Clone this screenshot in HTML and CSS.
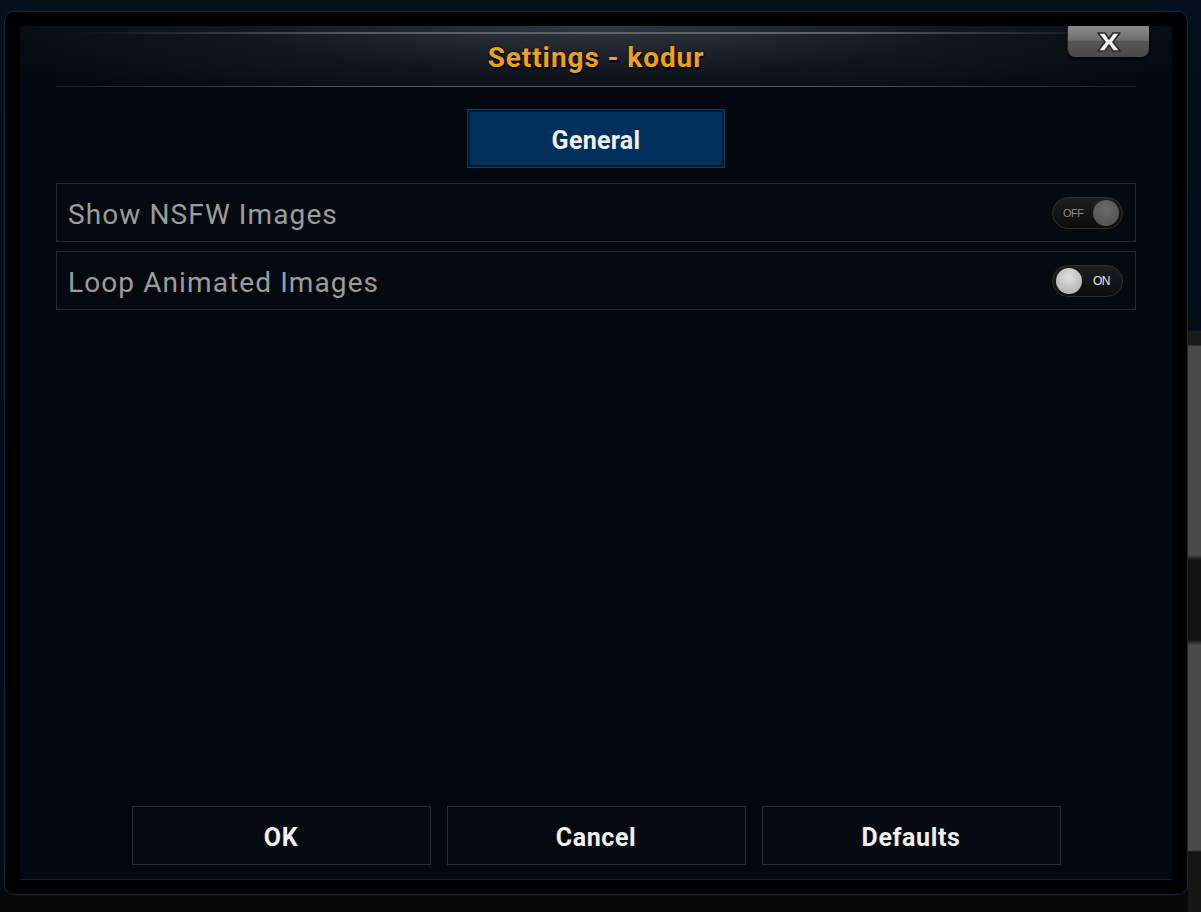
FILE: index.html
```html
<!DOCTYPE html>
<html>
<head>
<meta charset="utf-8">
<title>Settings - kodur</title>
<link rel="stylesheet" href="styles.css">
</head>
<body>
<div class="frame">
  <div class="panel">
    <div class="header">
      <h1 class="title">Settings - kodur</h1>
      <button class="close" aria-label="Close">
        <svg width="28" height="22" viewBox="0 0 28 22">
          <path d="M3 2 H10 L14 8 L18 2 H25 L18 11 L25 20 H18 L14 14 L10 20 H3 L10 11 Z" fill="#f2f2f2" stroke="#2a2a2a" stroke-width="1.6" stroke-linejoin="round"/>
        </svg>
      </button>
    </div>
    <div class="tabs">
      <div class="tab">General</div>
    </div>
    <div class="rows">
      <div class="row">
        <span class="label">Show NSFW Images</span>
        <span class="toggle off"><span class="ttext">OFF</span><span class="knob"></span></span>
      </div>
      <div class="row">
        <span class="label">Loop Animated Images</span>
        <span class="toggle on"><span class="knob"></span><span class="ttext">ON</span></span>
      </div>
    </div>
    <div class="buttons">
      <button class="btn">OK</button>
      <button class="btn">Cancel</button>
      <button class="btn">Defaults</button>
    </div>
  </div>
</div>
</body>
</html>
```

FILE: styles.css
```css
html, body {
  margin: 0;
  padding: 0;
}
body {
  width: 1201px;
  height: 912px;
  overflow: hidden;
  font-family: Roboto, "Liberation Sans", sans-serif;
  background:
    linear-gradient(to bottom, #03101e 0, #020c18 330px, #1a1a1a 331px, #1a1a1a 345px, #4a4a4a 346px, #4a4a4a 555px, #121212 560px, #121212 640px, #4a4a4a 645px, #4a4a4a 850px, #151515 852px, #151515 912px) right top / 13px 100% no-repeat,
    linear-gradient(to bottom, #03101e 0, #020b16 860px, #080808 895px, #080808 912px);
  box-sizing: border-box;
  padding: 11px 13px 17px 4px;
}
.frame {
  width: 1184px;
  height: 884px;
  box-sizing: border-box;
  border: 1px solid #0b2a4a;
  border-radius: 10px;
  background: #000;
  padding: 14px 15px;
}
.panel {
  position: relative;
  height: 100%;
  background: #030810;
  border-bottom: 1px solid #0a2036;
  box-sizing: border-box;
  display: flex;
  flex-direction: column;
}
.header {
  height: 61px;
  position: relative;
  display: flex;
  align-items: center;
  justify-content: center;
  background: radial-gradient(ellipse 62% 150% at 50% 0%, rgba(62,66,74,0.8), rgba(28,31,37,0.6) 50%, rgba(3,8,16,0) 100%);
}
.header::before {
  content: "";
  position: absolute;
  left: 0;
  right: 0;
  top: 6px;
  height: 2px;
  background: linear-gradient(to right, rgba(80,84,90,0) 5%, rgba(110,114,120,0.7) 30%, rgba(110,114,120,0.8) 70%, rgba(80,84,90,0) 95%);
}
.header::after {
  content: "";
  position: absolute;
  left: 36px;
  right: 36px;
  bottom: 0;
  height: 1px;
  background: linear-gradient(to right, rgba(60,63,68,0.4), #56595e 30%, #56595e 70%, rgba(60,63,68,0.4));
}
.title {
  margin: 0;
  padding-top: 1px;
  font-size: 28px;
  font-weight: 700;
  color: #eba11f;
  text-shadow: 1px 2px 1px #000, 0 0 2px #000;
  letter-spacing: 0.9px;
}
.close {
  position: absolute;
  top: 0;
  right: 23px;
  width: 82px;
  height: 31px;
  border: none;
  border-left: 1px solid #222;
  border-radius: 0 0 8px 8px;
  background: linear-gradient(to bottom, #8a8a8a 0, #6e6e6e 45%, #555 50%, #4a4a4a 100%);
  box-shadow: 0 2px 3px rgba(0,0,0,0.8);
  display: flex;
  align-items: center;
  justify-content: center;
  padding: 0;
}
.tabs {
  display: flex;
  justify-content: center;
  margin-top: 23px;
}
.tab {
  width: 256px;
  height: 57px;
  box-sizing: border-box;
  background: #002f5c;
  border: 2px solid #041a30;
  box-shadow: 0 0 0 1px #0b3a66;
  color: #f0f0f0;
  font-size: 25px;
  font-weight: 700;
  letter-spacing: 0.3px;
  padding-top: 3px;
  display: flex;
  align-items: center;
  justify-content: center;
}
.rows {
  margin: 16px 36px 0;
  display: flex;
  flex-direction: column;
  gap: 9px;
}
.row {
  height: 59px;
  box-sizing: border-box;
  border: 1px solid #25282e;
  background: #050a10;
  display: flex;
  align-items: center;
  justify-content: space-between;
  padding: 0 12px 0 11px;
}
.label {
  font-size: 28px;
  letter-spacing: 1.1px;
  color: #9c9c9c;
  padding-top: 4px;
}
.toggle {
  width: 71px;
  height: 32px;
  box-sizing: border-box;
  border-radius: 16px;
  border: 1px solid #2e2e2e;
  background: linear-gradient(to bottom, #1e1e1e, #0c0c0c);
  display: flex;
  align-items: center;
  justify-content: space-between;
  padding: 0 3px;
}
.knob {
  width: 26px;
  height: 26px;
  border-radius: 50%;
}
.off .knob {
  background: radial-gradient(circle at 50% 35%, #6a6a6a, #4e4e4e);
}
.on .knob {
  background: radial-gradient(circle at 50% 35%, #e0e0e0, #a8a8a8);
}
.ttext {
  font-family: "Liberation Sans", Arial, sans-serif;
  font-size: 11px;
  letter-spacing: -0.5px;
}
.off .ttext {
  color: #8a8a8a;
  padding-left: 7px;
}
.on .ttext {
  color: #e8e8e8;
  padding-right: 9px;
  font-size: 12px;
}
.buttons {
  margin-top: auto;
  margin-bottom: 14px;
  display: flex;
  justify-content: center;
  gap: 16px;
}
.btn {
  width: 299px;
  height: 59px;
  box-sizing: border-box;
  border: 1px solid #2a2d33;
  background: #060a11;
  color: #f0f0f0;
  font-family: Roboto, "Liberation Sans", sans-serif;
  font-size: 25px;
  font-weight: 700;
  letter-spacing: 0.6px;
  padding: 4px 0 0;
}
```
